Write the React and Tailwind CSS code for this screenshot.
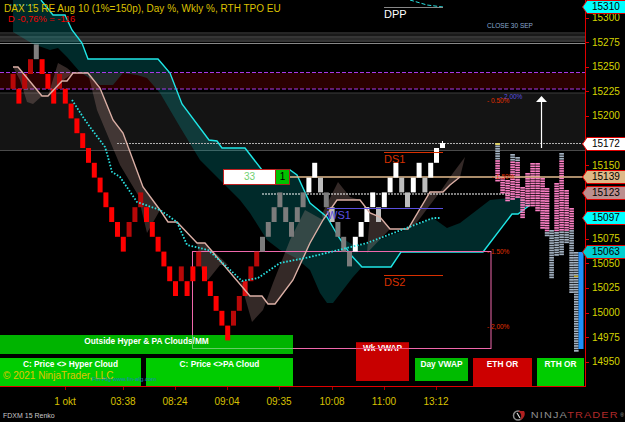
import React from "react";

const priceY = (p) => 18 + (15300 - p) * 0.9836;

const brickRows = [2,3,2,1,0,1,2,3,2,3,4,5,6,7,8,9,10,11,12,13,12,11,10,11,12,13,14,15,16,15,16,15,14,15,16,17,18,19,18,17,16,15,14,13,12,11,10,11,12,11,10,9,8,9,10,11,12,13,14,13,12,11,10,11,10,9,8,9,10,9,8,9,8,7];
const kindOf = (i) => {
  if (i <= 42) {
    const dark = [0,2,3,8,20,21,22,29,32,38,39,41,42];
    if (i === 4) return "#808080";
    if (i === 40) return "#e01010";
    return dark.includes(i) ? "#b80808" : "#ff0000";
  }
  if (i <= 50) return "#7c7c7c";
  const light = [53,55,63,67,68,71];
  const gray = [54,56,57,58];
  if (light.includes(i)) return "#bdbdbd";
  if (gray.includes(i)) return "#7c7c7c";
  return "#ffffff";
};

const upperCloud = "13,0 41,0 53,15 65,15 72,30 82,43 88,59 158,59 170,73 182,104 209,140 217,141 222,148 245,148 262,170 290,170 297,175 310,203 327,217 338,236 355,246 367,244 400,232 433,218 447,228 460,223 477,210 490,200 520,197 530,205 518,214 512,214 483,252 401,252 391,267 362,267 353,277 343,290 333,303 327,303 320,293 310,270 296,258 280,250 267,240 250,213 240,200 220,180 200,160 180,127 160,93 147,78 137,75 123,73 113,85 100,85 80,72 67,57 58,48 50,50 33,44 13,32";
const cyanLine = "41,0 53,15 65,15 72,30 82,43 88,59 158,59 170,73 182,104 209,140 217,141 222,148 245,148 262,170 290,170 297,175 310,203 327,217 338,236 350,254 362,267 391,267 401,252 483,252 512,214 518,214 530,205";
const paLine = "13,67 18,67 42,96 48,96 62,81 67,81 73,73 88,73 100,88 113,120 123,133 143,187 160,210 168,222 177,222 197,243 205,243 250,296 262,296 268,304 275,304 293,280 310,243 323,220 337,200 360,200 370,213 380,217 390,229 408,229 430,192 443,192 450,185 460,177";
const dotted = "72,100 83,117 90,127 105,147 108,157 112,172 120,177 137,202 160,210 177,222 187,245 208,250 227,267 242,281 258,278 280,263 310,257 367,243 433,218 440,218";
const paFills = [
  "13,67 18,67 42,96 33,104 27,102 20,80",
  "48,96 58,63 67,68 73,73 62,81",
  "88,73 100,88 113,120 123,133 143,187 160,210 147,233 138,195 120,165 97,110",
  "197,243 205,243 228,265 220,265 208,280 203,277",
  "240,280 250,296 262,296 268,304 275,304 293,280 310,243 323,220 305,210 290,240 273,283 263,310 252,322",
  "338,182 350,197 360,200 337,200 323,220 322,214",
  "370,213 380,217 390,229 367,253",
  "408,229 430,192 443,192 450,185 460,177 465,157 453,173 440,192 430,205 415,225",
];

// x, top, pink start, pink end, bottom
const profile = [
  [495.3, 143, 160, 182, 182],
  [500.3, 177, 177, 193, 193],
  [505.3, 180, 180, 200, 200],
  [510.3, 154, 159, 200, 200],
  [515.3, 157, 160, 197, 197],
  [520.3, 187, 187, 218, 218],
  [525.3, 173, 173, 205, 205],
  [530.3, 163, 163, 207, 207],
  [535.3, 163, 163, 210, 210],
  [540.3, 178, 178, 227, 227],
  [544.8, 188, 188, 230, 236],
  [549.3, 230, 277, 277, 277],
  [554.3, 183, 183, 230, 255],
  [559.3, 153, 160, 230, 255],
  [564.3, 190, 190, 230, 243],
  [569.3, 208, 208, 228, 293],
  [574, 252, 999, 999, 351],
];

const stripes = profile.flatMap(([x, top, pinkStart, pinkEnd, bottom]) => {
  const out = [];
  for (let y = top; y < bottom; y += 2.45) {
    const isPink = y >= pinkStart && y < pinkEnd;
    out.push({ x, y, fill: isPink ? "#fb7fc4" : "#a3b2c2" });
  }
  return out;
});

const chartLabels = [
  { t: "DPP", x: 384, y: 18, size: 11, fill: "#ffffff" },
  { t: "DS1", x: 384, y: 163, size: 11, fill: "#d83000" },
  { t: "DS2", x: 384, y: 286, size: 11, fill: "#d83000" },
  { t: "WS1", x: 327, y: 219, size: 11, fill: "#5a50e0" },
  { t: "CLOSE 30 SEP", x: 487, y: 28, size: 6.5, fill: "#8aa8d0" },
  { t: "- 2.00%", x: 500, y: 99, size: 6.5, fill: "#5a50e0" },
  { t: "- 0.50%", x: 487, y: 103, size: 6.5, fill: "#e03000" },
  { t: "- 1.50%", x: 492, y: 179, size: 6.5, fill: "#e03000" },
  { t: "- 1.50%", x: 487, y: 254, size: 6.5, fill: "#e03000" },
  { t: "- 2,00%", x: 487, y: 329, size: 6.5, fill: "#e03000" },
  { t: "Fin-Alg  www.fin-alg.com", x: 92, y: 381, size: 6, fill: "#1a80c0" },
];

const axisTicks = [15300, 15275, 15250, 15225, 15200, 15150, 15075, 15050, 15025, 15000, 14975, 14950];
const tags = [
  { p: 15310, fill: "#00ffff", y: 7 },
  { p: 15172, fill: "#ffffff", y: 143.5 },
  { p: 15139, fill: "#deb887", y: 176.5 },
  { p: 15123, fill: "#bc8f8f", y: 192.5 },
  { p: 15097, fill: "#00ffff", y: 217.5 },
  { p: 15063, fill: "#00ced1", y: 251.5 },
];
const times = [["1 okt", 65], ["03:38", 123], ["08:24", 175], ["09:04", 227], ["09:35", 279], ["10:08", 332], ["11:00", 384], ["13:12", 436]];

function Tag({ fill, y, children }) {
  return (
    <div className="absolute left-[-4px] w-[44px] h-[14px] flex items-center pl-[10px]" style={{ top: y - 7 }}>
      <svg width="44" height="14" className="absolute left-0 top-0">
        <polygon points="0.5,7 5,0.5 43.5,0.5 43.5,13.5 5,13.5" fill={fill} stroke="#e00000" strokeWidth="1" />
      </svg>
      <span className="relative leading-[14px] text-[10px] text-black">{children}</span>
    </div>
  );
}

function Box({ className, children }) {
  return <div className={`flex flex-col items-center font-bold text-white text-[8.3px] leading-[10px] ${className}`}>{children}</div>;
}

export default function App() {
  return (
    <div className="w-[625px] h-[422px] bg-black overflow-hidden flex flex-col font-['Liberation_Sans',Arial,sans-serif]">
      <div className="flex h-[387px]">
        <div className="relative w-[586px] h-[387px] border-r border-b border-[#e00000]">
          <div className="absolute inset-0 flex flex-col justify-end">
            <div className="flex h-[51px]">
              <div className="w-[293px] flex flex-col gap-[4px]">
                <Box className="h-[19px] bg-[#00b400] pt-[0.5px]">Outside Hyper &amp; PA Clouds/MM</Box>
                <div className="flex gap-[5px] h-[28px]">
                  <Box className="w-[141px] bg-[#00cc00] pt-[0.5px]">
                    C: Price &lt;&gt; Hyper Cloud
                    <div className="self-start pl-[3px] pt-[1px] font-normal text-[10px] leading-[12px] text-[#e0c400] whitespace-nowrap">© 2021 NinjaTrader, LLC</div>
                  </Box>
                  <Box className="flex-1 bg-[#00cc00] pt-[0.5px]">C: Price &lt;&gt;PA Cloud</Box>
                </div>
              </div>
              <Box className="ml-[63px] mt-[7px] w-[53px] h-[39px] bg-[#c80000] border-t border-[#a00000]">Wk VWAP</Box>
              <Box className="ml-[6px] mt-[23px] w-[53px] h-[23px] bg-[#00bb00] pt-[0.5px]">Day VWAP</Box>
              <Box className="ml-[5px] mt-[23px] w-[59px] h-[28px] bg-[#cc0000] pt-[0.5px]">ETH OR</Box>
              <Box className="ml-[5px] mt-[23px] w-[47px] h-[28px] bg-[#00cc00] pt-[0.5px]">RTH OR</Box>
            </div>
          </div>

          <svg width="585" height="386" className="absolute left-0 top-0">
            <rect x="0" y="73" width="585" height="16" fill="#2a0000" />
            <rect x="0" y="93" width="585" height="57" fill="#141414" />
            {[[33,"#4a4a4a"],[35,"#333"],[37,"#6a6a6a"],[39,"#555"],[41,"#666"],[43.5,"#888"]].map(([y,c]) => (
              <line key={y} x1="0" x2="585" y1={y} y2={y} stroke={c} strokeWidth="1" />
            ))}
            <line x1="0" x2="585" y1="93" y2="93" stroke="#3c3c3c" />
            <line x1="0" x2="585" y1="150.5" y2="150.5" stroke="#4a4a4a" />
            <polygon points={upperCloud} fill="#00d0d0" fillOpacity="0.2" />
            <line x1="0" x2="585" y1="72.5" y2="72.5" stroke="#a838e8" strokeDasharray="4 2" />
            <line x1="0" x2="585" y1="89" y2="89" stroke="#a838e8" strokeDasharray="4 2" />
            {paFills.map((p) => <polygon key={p} points={p} fill="#c8a098" fillOpacity="0.26" />)}
            <line x1="117" x2="585" y1="143.5" y2="143.5" stroke="#b0b0b0" strokeDasharray="2 1" />
            <line x1="262" x2="512" y1="194" y2="194" stroke="#ffffff" strokeDasharray="2 1" />
            <polyline points={cyanLine} fill="none" stroke="#1fe6e6" strokeWidth="1.4" />
            {stripes.map((s, i) => <rect key={i} x={s.x} y={s.y} width="4.6" height="1.7" fill={s.fill} />)}
            <line x1="290" x2="585" y1="177" y2="177" stroke="#e3bb8e" strokeWidth="1.6" />
            <rect x="192.5" y="251.5" width="298.5" height="97" fill="none" stroke="#f068ac" />
            <line x1="192.5" x2="293" y1="348.5" y2="348.5" stroke="#66cc66" />
            <line x1="192.5" x2="192.5" y1="335" y2="349" stroke="#66cc66" />
            <line x1="356" x2="409" y1="348.5" y2="348.5" stroke="#ec4050" strokeOpacity="0.5" />
            <rect x="495.3" y="143" width="4.6" height="2" fill="#e0d060" />
            <rect x="574" y="275.5" width="4.6" height="1.5" fill="#b8a020" />
            <rect x="578.5" y="252" width="5" height="97" fill="#2090f8" />
            {brickRows.map((n, i) => (
              <rect key={i} x={10.6 + i * 5.8} y={44.4 + n * 14.8} width="5" height="14.8" fill={kindOf(i)} />
            ))}
            <polyline points={paLine} fill="none" stroke="#dcb0a6" strokeWidth="1.4" />
            <polyline points={dotted} fill="none" stroke="#28e0e0" strokeWidth="1.8" strokeDasharray="1.6 1.7" />
            <polyline points="10,5 35,5" fill="none" stroke="#28e0e0" strokeWidth="1" strokeDasharray="1.4 1.8" />
            <polyline points="410,0 427,5 443,7" fill="none" stroke="#28e0e0" strokeWidth="1" strokeDasharray="4 2" />
            <line x1="384" x2="443" y1="7.5" y2="7.5" stroke="#888" />
            <line x1="384" x2="443" y1="152.5" y2="152.5" stroke="#d83000" />
            <line x1="327" x2="443" y1="208.5" y2="208.5" stroke="#5a4fe0" />
            <line x1="384" x2="443" y1="275.5" y2="275.5" stroke="#d83000" />
            <rect x="440" y="143" width="5" height="5" fill="#ffffff" />
            <line x1="442.5" x2="442.5" y1="141" y2="143" stroke="#ffffff" />
            <line x1="541.5" x2="541.5" y1="102" y2="148" stroke="#ffffff" strokeWidth="1.2" />
            <polygon points="536,102 547,102 541.5,96" fill="#ffffff" />
            {chartLabels.map((l) => (
              <text key={l.t + l.y} x={l.x} y={l.y} fontSize={l.size} fill={l.fill}>{l.t}</text>
            ))}
          </svg>

          <div className="absolute left-0 top-0 flex flex-col pl-[4px] pt-[3px] whitespace-nowrap">
            <div className="text-[10px] leading-[11px] text-[#dcc000]">DAX 15 RE Aug 10 (1%=150p), Day %, Wkly %, RTH TPO EU</div>
            <div className="pl-[4px] text-[9.3px] leading-[11px] text-[#f00000]">D -0,76% = -116</div>
          </div>

          <div className="absolute left-[223px] top-[169px] flex h-[16px]">
            <div className="w-[53px] bg-white border border-[#c02020] text-[10px] leading-[14px] text-center text-[#70d070]">33</div>
            <div className="w-[14px] bg-[#00c000] border border-[#a02020] border-l-0 text-[10px] leading-[14px] text-center text-black">1</div>
          </div>
        </div>

        <div className="relative flex-1">
          {axisTicks.map((p) => (
            <div key={p} className="absolute left-0 flex items-center gap-[3px] h-[12px]" style={{ top: priceY(p) - 6 }}>
              <div className="w-[3px] h-[1px] bg-[#e00000]" />
              <span className="text-[10px] leading-[12px] text-[#d4d400]">{p}</span>
            </div>
          ))}
          {tags.map((t) => <Tag key={t.p} fill={t.fill} y={t.y}>{t.p}</Tag>)}
        </div>
      </div>

      <div className="relative flex-1 flex flex-col justify-end">
        {times.map(([t, x]) => (
          <div key={t} className="absolute top-0 flex flex-col items-center gap-[6px] w-[40px]" style={{ left: x - 20 }}>
            <div className="w-[1px] h-[3px] bg-[#a00000]" />
            <span className="text-[10px] leading-[12px] text-[#d8c000]">{t}</span>
          </div>
        ))}
        <div className="flex items-center justify-between pl-[3px] pr-[1px] pb-[1px]">
          <div className="text-[7px] leading-[9px] text-[#c8c8c8] whitespace-nowrap">FDXM 15 Renko</div>
          <div className="flex items-center gap-[2px]">
            <svg width="16" height="11" viewBox="0 0 16 11">
              <circle cx="6" cy="5.5" r="4.5" fill="none" stroke="#8a8a8a" strokeWidth="1.5" />
              <path d="M6 1 C10 3 10 8 8 10 C12 9 14 4 12 1 Z" fill="#b02020" />
              <path d="M5 3 L8 8" stroke="#dcdcdc" strokeWidth="1.2" />
            </svg>
            <span className="ml-[20px] origin-right scale-x-[1.28] text-[8.5px] leading-[11px] tracking-[0.9px] whitespace-nowrap text-[#8e8e8e]">
              NINJA<span className="text-[#b02a2a]">TRADER</span>
            </span>
            <span className="text-[5px] leading-[11px] self-start text-[#a0a0a0]">®</span>
          </div>
        </div>
      </div>
    </div>
  );
}
